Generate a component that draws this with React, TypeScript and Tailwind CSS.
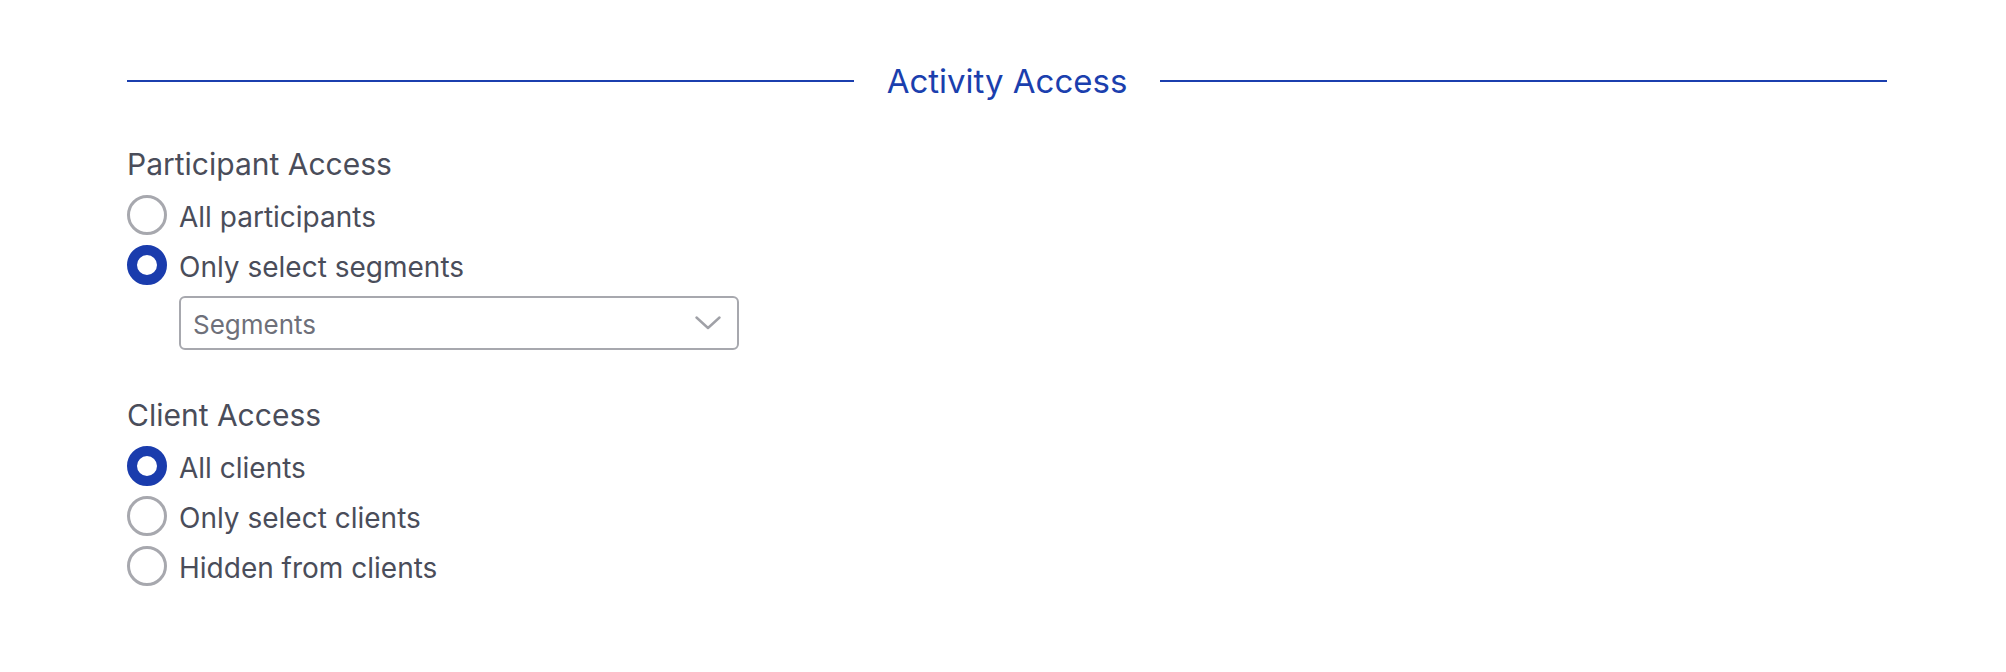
import React from "react";

const font = { fontFamily: 'Inter, "Noto Sans", sans-serif' };

function Radio({ label, checked }: { label: string; checked?: boolean }) {
  return (
    <div className="flex h-[50px] items-center gap-[12px]">
      <span
        className={
          checked
            ? "box-border h-[40px] w-[40px] shrink-0 rounded-full border-[10px] border-[#1a3cad] bg-white"
            : "box-border h-[40px] w-[40px] shrink-0 rounded-full border-[3px] border-[#a7a8ae] bg-white"
        }
      />
      <span className="pt-[4px] text-[28px] leading-[46px] text-[#4a4d5a]">{label}</span>
    </div>
  );
}

export default function App() {
  return (
    <div className="min-h-[672px] w-[2006px] bg-white pt-[57px]" style={font}>
      <div className="ml-[127px] w-[1760px]">
        <div className="flex h-[48px] items-center gap-[33px]">
          <div className="h-[2px] flex-1 bg-[#1b3fae]" />
          <div className="text-[33px] leading-[48px] text-[#1b3fae]">Activity Access</div>
          <div className="h-[2px] flex-1 bg-[#1b3fae]" />
        </div>

        <div className="mt-[39px] text-[30px] leading-[40px] text-[#4a4d5a]">Participant Access</div>
        <div className="mt-[6px] flex flex-col">
          <Radio label="All participants" />
          <Radio label="Only select segments" checked />
        </div>
        <div className="ml-[52px] mt-[6px] flex h-[54px] w-[560px] items-center justify-between rounded-[6px] border-2 border-[#a7a8ae] pl-[12px] pr-[16px]">
          <span className="pt-[3px] text-[26px] text-[#6e707a]">Segments</span>
          <svg width="26" height="14" viewBox="0 0 26 14" fill="none">
            <path d="M1.5 1.5 L13 12 L24.5 1.5" stroke="#a0a1a7" strokeWidth="2.4" strokeLinecap="round" strokeLinejoin="round" />
          </svg>
        </div>

        <div className="mt-[45px] text-[30px] leading-[40px] text-[#4a4d5a]">Client Access</div>
        <div className="mt-[6px] flex flex-col">
          <Radio label="All clients" checked />
          <Radio label="Only select clients" />
          <Radio label="Hidden from clients" />
        </div>
      </div>
    </div>
  );
}
